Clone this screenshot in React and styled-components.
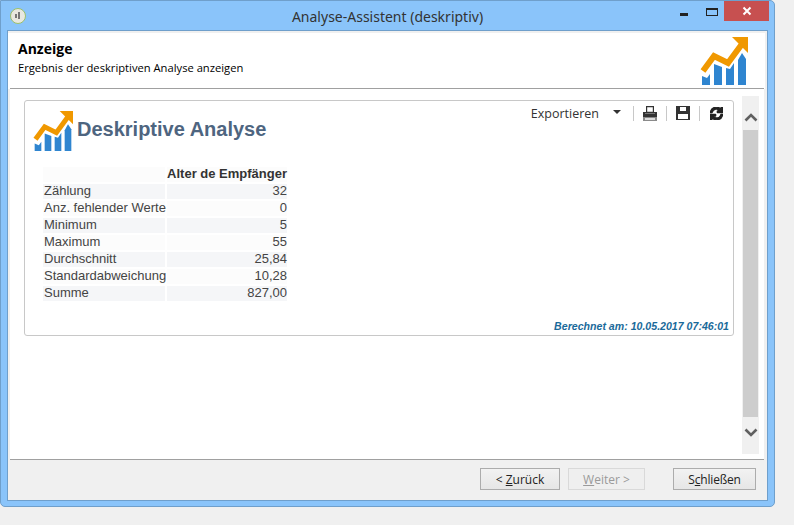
import React from 'react';
import styled, { createGlobalStyle } from 'styled-components';
import { FaSync } from 'react-icons/fa';

const GlobalStyle = createGlobalStyle`
  html, body {
    margin: 0;
    padding: 0;
    background: #f0f0f0;
  }
`;

const rows = [
  ['Zählung', '32'],
  ['Anz. fehlender Werte', '0'],
  ['Minimum', '5'],
  ['Maximum', '55'],
  ['Durchschnitt', '25,84'],
  ['Standardabweichung', '10,28'],
  ['Summe', '827,00'],
];

const Logo = ({ size }) => (
  <svg width={size} height={size} viewBox="0 0 48 48">
    <g fill="#2f85d0">
      <polygon points="2,48 10,48 10,37 7,41 2,39" />
      <polygon points="14,48 22,48 22,30 14,27" />
      <polygon points="26,48 34,48 34,26 30,32 26,31" />
      <polygon points="38,48 46,48 46,22 42,16 38,23" />
    </g>
    <polyline points="3,34 14,19 28,26 42,7" fill="none" stroke="#f09800" strokeWidth="6" strokeLinejoin="miter" />
    <polygon points="32,0 48,0 48,16" fill="#f09800" />
  </svg>
);

const PrintIcon = () => (
  <svg width="14" height="15" viewBox="0 0 14 15">
    <path d="M3 0h8v7H3z M4.2 1.2v4.6h5.6V1.2z" fill="#333" fillRule="evenodd" />
    <path d="M0 6h14v5H0z" fill="#333" />
    <path d="M2 7h10v1H2z" fill="#777" />
    <path d="M0 11h14v4H0z" fill="#8a8a8a" />
    <path d="M2 12h10v2H2z" fill="#ddd" />
  </svg>
);

const SaveIcon = () => (
  <svg width="14" height="14" viewBox="0 0 14 14">
    <path d="M0 0h14v14H0z M4 1v4h6V1z M2 8v5h10V8z" fill="#333" fillRule="evenodd" />
  </svg>
);

const Page = () => (
  <>
    <GlobalStyle />
    <Window>
      <TitleBar>
        <AppIcon>
          <svg width="16" height="16" viewBox="0 0 16 16">
            <circle cx="8" cy="8" r="7.5" fill="#e8e8e0" stroke="#9cc06a" />
            <path d="M5 10V6h2v4z M8 4h2v7H8z" fill="#777" />
          </svg>
        </AppIcon>
        <WindowTitle>Analyse-Assistent (deskriptiv)</WindowTitle>
        <Controls>
          <MinButton />
          <MaxButton />
          <CloseButton>
            <svg width="10" height="10" viewBox="0 0 10 10">
              <path d="M1.5 1.5l7 7M8.5 1.5l-7 7" stroke="#fff" strokeWidth="2" />
            </svg>
          </CloseButton>
        </Controls>
      </TitleBar>
      <Client>
        <Header>
          <HeaderText>
            <HeaderTitle>Anzeige</HeaderTitle>
            <HeaderSub>Ergebnis der deskriptiven Analyse anzeigen</HeaderSub>
          </HeaderText>
          <Logo size={48} />
        </Header>
        <Content>
          <Card>
            <CardHead>
              <CardTitle>
                <Logo size={40} />
                <ReportName>Deskriptive Analyse</ReportName>
              </CardTitle>
              <Toolbar>
                <ExportLabel>Exportieren</ExportLabel>
                <Caret />
                <ToolButton><PrintIcon /></ToolButton>
                <ToolButton><SaveIcon /></ToolButton>
                <ToolButton><FaSync size={13} color="#222" stroke="#222" strokeWidth={50} /></ToolButton>
              </Toolbar>
            </CardHead>
            <Grid>
              <Cell $shade="#fcfcfc" />
              <HeadCell>Alter de Empfänger</HeadCell>
              {rows.map(([label, value], i) => (
                <React.Fragment key={label}>
                  <Cell $shade={i % 2 ? '#fcfcfc' : '#f5f6f8'}>{label}</Cell>
                  <ValueCell $shade={i % 2 ? '#fcfcfc' : '#f5f6f8'}>{value}</ValueCell>
                </React.Fragment>
              ))}
            </Grid>
            <Stamp>Berechnet am: 10.05.2017 07:46:01</Stamp>
          </Card>
          <Scrollbar>
            <Arrow $height={34} $top={17}>
              <svg width="14" height="9" viewBox="0 0 14 9">
                <path d="M1.5 7.5L7 2l5.5 5.5" fill="none" stroke="#606060" strokeWidth="2.6" />
              </svg>
            </Arrow>
            <Thumb />
            <Arrow $height={37} $top={11}>
              <svg width="14" height="9" viewBox="0 0 14 9">
                <path d="M1.5 1.5L7 7l5.5-5.5" fill="none" stroke="#606060" strokeWidth="2.6" />
              </svg>
            </Arrow>
          </Scrollbar>
        </Content>
        <Footer>
          <NavGroup>
            <DialogButton $width={80}>&lt; <u>Z</u>urück</DialogButton>
            <DialogButton $width={77} disabled><u>W</u>eiter &gt;</DialogButton>
          </NavGroup>
          <CloseDialogButton $width={83}>S<u>c</u>hließen</CloseDialogButton>
        </Footer>
      </Client>
    </Window>
  </>
);

const Window = styled.div`
  box-sizing: border-box;
  width: 775px;
  height: 507px;
  display: flex;
  flex-direction: column;
  padding: 0 6px 5px;
  background: #8ac4fa;
  border: 1px solid #6f9fcb;
  border-radius: 0 5px 5px 5px;
  font-family: "Open Sans", "Noto Sans", sans-serif;
`;

const TitleBar = styled.div`
  position: relative;
  height: 29px;
  flex: none;
  display: flex;
  align-items: center;
  justify-content: center;
`;

const AppIcon = styled.div`
  position: absolute;
  left: 3px;
  top: 6px;
  width: 16px;
  height: 16px;
`;

const WindowTitle = styled.div`
  font-family: "Noto Sans", sans-serif;
  font-size: 14px;
  color: #333;
  margin-top: 1px;
`;

const Controls = styled.div`
  position: absolute;
  right: -1px;
  top: 0;
  display: flex;
  align-items: flex-start;
`;

const MinButton = styled.div`
  width: 8px;
  height: 3px;
  margin: 12px 18px 0 0;
  background: #222;
`;

const MaxButton = styled.div`
  box-sizing: border-box;
  width: 12px;
  height: 8px;
  margin: 7px 6px 0 0;
  border: 1px solid #222;
  border-top-width: 2px;
`;

const CloseButton = styled.div`
  width: 45px;
  height: 20px;
  background: #c75050;
  display: flex;
  align-items: center;
  justify-content: center;
`;

const Client = styled.div`
  flex: 1;
  min-height: 0;
  display: flex;
  flex-direction: column;
  border: 1px solid #6f9fcb;
  background: #f0f0f0;
`;

const Header = styled.div`
  box-sizing: border-box;
  height: 56px;
  flex: none;
  margin: 2px 2px 0 0;
  padding: 4px 17px 0 10px;
  display: flex;
  justify-content: space-between;
  background: #fff;
  position: relative;
  &::after {
    content: "";
    position: absolute;
    left: 2px;
    right: 1px;
    bottom: 0;
    height: 1px;
    background: #a0a0a0;
  }
`;

const HeaderText = styled.div`
  display: flex;
  flex-direction: column;
`;

const HeaderTitle = styled.div`
  font-size: 14px;
  font-weight: 700;
  line-height: 20px;
  margin-top: 2px;
  color: #000;
`;

const HeaderSub = styled.div`
  font-size: 11.2px;
  line-height: 16px;
  margin-top: 1px;
  color: #000;
`;

const Content = styled.div`
  flex: 1;
  min-height: 0;
  margin: 0 3px 0 2px;
  padding: 7px 5px 0 14px;
  display: flex;
  align-items: flex-start;
  gap: 8px;
  background: #fff;
  border-bottom: 1px solid #a0a0a0;
`;

const Card = styled.div`
  box-sizing: border-box;
  width: 710px;
  height: 236px;
  margin-top: 4px;
  flex: none;
  display: flex;
  flex-direction: column;
  border: 1px solid #c8c8c8;
  border-radius: 3px;
  padding: 0 1px 0 18px;
`;

const CardHead = styled.div`
  height: 65px;
  flex: none;
  margin-left: -10px;
  display: flex;
  justify-content: space-between;
  align-items: flex-start;
`;

const CardTitle = styled.div`
  display: flex;
  align-items: center;
  gap: 4px;
  margin-top: 10px;
`;

const ReportName = styled.div`
  font-family: "Liberation Sans", Arial, sans-serif;
  font-size: 20px;
  font-weight: 700;
  color: #4e6580;
  margin-top: -4px;
`;

const Toolbar = styled.div`
  display: flex;
  align-items: center;
  height: 22px;
  margin-top: 1px;
`;

const ExportLabel = styled.span`
  font-size: 12.5px;
  color: #333;
  margin-left: 1px;
`;

const Caret = styled.span`
  width: 0;
  height: 0;
  margin: 0 0 2px 14px;
  border: 4px solid transparent;
  border-top: 4px solid #333;
  border-bottom: 0;
`;

const ToolButton = styled.div`
  box-sizing: border-box;
  width: 33px;
  height: 15px;
  display: flex;
  align-items: center;
  justify-content: center;
  border-left: 1px solid #c8c8c8;
  &:nth-of-type(1) {
    margin-left: 12px;
  }
`;

const Grid = styled.div`
  display: grid;
  grid-template-columns: 122px 120px;
  grid-auto-rows: 15px;
  column-gap: 2px;
  row-gap: 2px;
  margin-top: 1px;
  font-family: "Liberation Sans", Arial, sans-serif;
  font-size: 13px;
  line-height: 14px;
  color: #444;
`;

const Cell = styled.div`
  background: ${(p) => p.$shade};
  padding-left: 1px;
  white-space: nowrap;
`;

const ValueCell = styled(Cell)`
  text-align: right;
`;

const HeadCell = styled.div`
  background: #fcfcfc;
  font-weight: 700;
  text-align: right;
  color: #333;
  white-space: nowrap;
`;

const Stamp = styled.div`
  margin: auto 3px 3px 0;
  text-align: right;
  font-family: "Liberation Sans", Arial, sans-serif;
  font-size: 10.6px;
  font-weight: 700;
  font-style: italic;
  color: #1a6a9a;
`;

const Scrollbar = styled.div`
  width: 17px;
  height: 358px;
  flex: none;
  display: flex;
  flex-direction: column;
  background: #f0f0f0;
`;

const Arrow = styled.div`
  box-sizing: border-box;
  height: ${(p) => p.$height}px;
  padding-top: ${(p) => p.$top}px;
  flex: none;
  display: flex;
  align-items: flex-start;
  justify-content: center;
`;

const Thumb = styled.div`
  flex: 1;
  width: 15px;
  margin: 0 auto;
  background: #cdcdcd;
`;

const Footer = styled.div`
  flex: 1;
  max-height: 40px;
  min-height: 40px;
  padding: 8px 11px 0 472px;
  box-sizing: border-box;
  display: flex;
  justify-content: space-between;
  align-items: flex-start;
`;

const NavGroup = styled.div`
  display: flex;
  gap: 8px;
`;

const DialogButton = styled.button`
  box-sizing: border-box;
  width: ${(p) => p.$width}px;
  height: 22px;
  padding: 0;
  font-family: "Open Sans", "Noto Sans", sans-serif;
  font-size: 12px;
  color: #222;
  background: linear-gradient(#f2f2f2, #e6e6e6);
  border: 1px solid #acacac;
  &:disabled {
    color: #9a9a9a;
    background: #efefef;
    border-color: #d9d9d9;
  }
`;

const CloseDialogButton = styled(DialogButton)`
  letter-spacing: -0.2px;
`;

export default Page;
